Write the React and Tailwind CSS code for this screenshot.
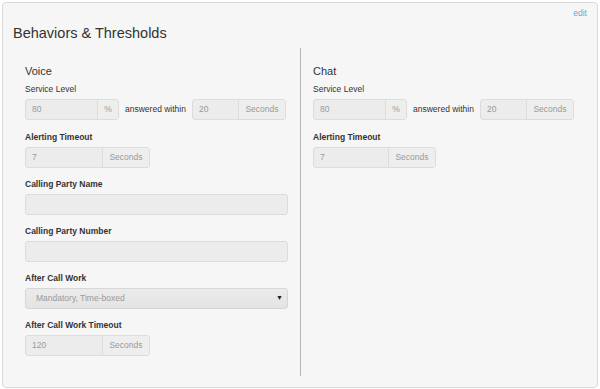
import React from 'react';

const font = { fontFamily: '"Liberation Sans", Arial, sans-serif' };

const Label = ({ children, bold = true, mt = 'mt-[10px]' }) => (
  <div className={`text-[8.5px] leading-[12px] text-[#333] mb-[4px] ${bold ? 'font-bold' : ''} ${mt}`}>
    {children}
  </div>
);

const InputGroup = ({ value, addon, inputW, addonW }) => (
  <div className="flex shrink-0 h-[21px] rounded-[3px] border border-[#dcdcdc] bg-[#ececec] text-[8.5px] text-[#9a9a9a]">
    <div className={`${inputW} flex items-center pl-[6px]`}>{value}</div>
    <div className={`${addonW} flex items-center justify-center border-l border-[#dcdcdc] bg-[#eeeeee]`}>
      {addon}
    </div>
  </div>
);

const ServiceLevel = () => (
  <div className="flex items-center whitespace-nowrap">
    <InputGroup value="80" addon="%" inputW="w-[71px]" addonW="w-[21px]" />
    <span className="mx-[6px] text-[8.5px] text-[#333]">answered within</span>
    <InputGroup value="20" addon="Seconds" inputW="w-[45px]" addonW="w-[47px]" />
  </div>
);

const Seconds = ({ value, inputW = 'w-[76px]' }) => (
  <div className="flex">
    <InputGroup value={value} addon="Seconds" inputW={inputW} addonW="w-[47px]" />
  </div>
);

const TextInput = () => (
  <div className="h-[21px] rounded-[3px] border border-[#dcdcdc] bg-[#ececec]" />
);

export default function App() {
  return (
    <div className="w-[600px] h-[389px] bg-white pt-[2px] pl-[2px]" style={font}>
      <div className="w-[596px] h-[386px] rounded-[4px] border border-[#d9d9d9] bg-[#f6f6f6]">
        {/* Header */}
        <div className="flex justify-between items-start pl-[10px] pr-[10px] pt-[4px]">
          <h2 className="mt-[18px] text-[14.5px] leading-[16px] text-[#333]">Behaviors &amp; Thresholds</h2>
          <a className="text-[8.5px] leading-[12px] text-[#6aa6cf]">edit</a>
        </div>

        {/* Columns */}
        <div className="flex mt-[7px] pl-[10px]">
          <div className="w-[287px] px-[12px] pt-[16px] pb-[20px]">
            <div className="text-[11px] leading-[14px] text-[#333]">Voice</div>
            <Label bold={false} mt="mt-[5px]">Service Level</Label>
            <ServiceLevel />
            <Label mt="mt-[11px]">Alerting Timeout</Label>
            <Seconds value="7" />
            <Label>Calling Party Name</Label>
            <TextInput />
            <Label>Calling Party Number</Label>
            <TextInput />
            <Label>After Call Work</Label>
            <div className="flex h-[21px] items-center justify-between rounded-[3px] border border-[#d6d6d6] bg-gradient-to-b from-[#ebebeb] to-[#e4e4e4] pl-[10px] pr-[4px] text-[8.5px] text-[#999]">
              <span>Mandatory, Time-boxed</span>
              <span className="text-[7px] text-[#222]">▼</span>
            </div>
            <Label>After Call Work Timeout</Label>
            <Seconds value="120" />
          </div>
          <div className="border-l border-[#b5b5b5] pl-[12px] pt-[16px] w-[275px]">
            <div className="text-[11px] leading-[14px] text-[#333]">Chat</div>
            <Label bold={false} mt="mt-[5px]">Service Level</Label>
            <ServiceLevel />
            <Label mt="mt-[11px]">Alerting Timeout</Label>
            <Seconds value="7" inputW="w-[74px]" />
          </div>
        </div>
      </div>
    </div>
  );
}
